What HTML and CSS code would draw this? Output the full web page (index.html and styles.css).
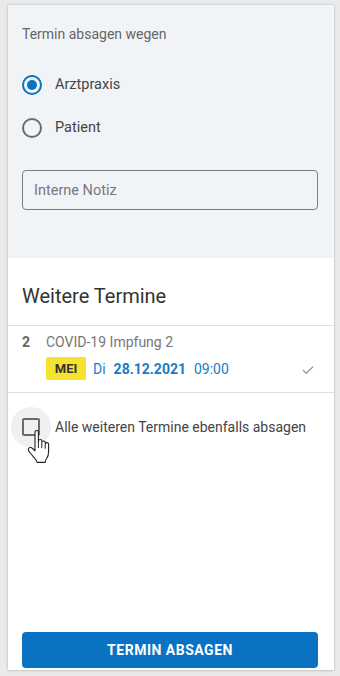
FILE: index.html
```html
<!DOCTYPE html>
<html lang="de">
<head>
<meta charset="utf-8">
<link rel="stylesheet" href="styles.css">
</head>
<body>
<div class="card">
  <section class="reason">
    <div class="reason-title">Termin absagen wegen</div>
    <div class="radios">
      <label class="radio-row"><span class="radio checked"></span><span>Arztpraxis</span></label>
      <label class="radio-row"><span class="radio"></span><span>Patient</span></label>
    </div>
    <div class="note">Interne Notiz</div>
  </section>
  <section class="more">
    <h2 class="more-title">Weitere Termine</h2>
    <div class="appt">
      <div class="appt-line1"><span class="appt-num">2</span><span class="appt-name">COVID-19 Impfung 2</span></div>
      <div class="appt-line2">
        <span class="badge">MEI</span>
        <span class="day">Di</span>
        <span class="date">28.12.2021</span>
        <span class="time">09:00</span>
        <svg class="check" width="12" height="10" viewBox="0 0 12 10"><path d="M1 5.2 L4.2 8.4 L11 1.6" fill="none" stroke="#8a8a8a" stroke-width="1.2"/></svg>
      </div>
    </div>
    <div class="cb-row">
      <span class="cb-hit"><span class="cb"></span></span>
      <span class="cb-label">Alle weiteren Termine ebenfalls absagen</span>
      <svg class="cursor" width="27" height="34" viewBox="0 0 26 34">
        <path d="M7.5 2.2c0-1 .8-1.7 1.7-1.7s1.7.7 1.7 1.7v10.3l.1-1.4c0-.9.8-1.6 1.7-1.6s1.7.7 1.7 1.6v1.5c0-.9.8-1.6 1.7-1.6s1.7.7 1.7 1.6v1.6c0-.9.8-1.6 1.6-1.6.9 0 1.7.7 1.7 1.6v7.2c0 3.2-.7 5.3-2 7.1-1 1.4-1.5 2.5-1.5 3.9H9.6c0-1.3-.9-2.6-2.4-4L2.4 22.5c-1-1-1.6-2.1-1.6-3 0-1.2 1-2 2.1-2 .8 0 1.6.4 2.2 1l2.4 2.4z" fill="#fff" stroke="#222" stroke-width="1.1" stroke-linejoin="round"/>
        <path d="M10.9 12.5v5.5M14.3 13.1v5M17.7 14.6v4.2" stroke="#222" stroke-width="1" fill="none"/>
      </svg>
    </div>
    <div class="spacer"></div>
    <button class="submit">TERMIN ABSAGEN</button>
  </section>
</div>
</body>
</html>
```

FILE: styles.css
```css
html, body {
  margin: 0;
  padding: 0;
}
body {
  background: #eaeaea;
  font-family: Roboto, "Liberation Sans", Arial, sans-serif;
  width: 340px;
  height: 676px;
  box-sizing: border-box;
  padding: 5px 6px 6px 8px;
}
.card {
  background: #fff;
  height: 665px;
  display: flex;
  flex-direction: column;
  box-shadow: 0 0 2px rgba(0,0,0,0.18), 0 1px 3px rgba(0,0,0,0.10);
}
.reason {
  background: #f1f4f7;
  padding: 21px 16px 48px 14px;
}
.reason-title {
  font-size: 14px;
  line-height: 16px;
  color: #666;
}
.radios {
  margin-top: 21px;
  display: flex;
  flex-direction: column;
}
.radio-row {
  height: 43px;
  display: flex;
  align-items: center;
  font-size: 14.5px;
  color: #444;
}
.radio {
  width: 16px;
  height: 16px;
  border: 2px solid #6b6b6b;
  border-radius: 50%;
  margin: 0 13px 0 0;
  box-sizing: content-box;
  position: relative;
}
.radio.checked {
  border-color: #0a72c2;
}
.radio.checked::after {
  content: "";
  position: absolute;
  left: 3px;
  top: 3px;
  width: 10px;
  height: 10px;
  border-radius: 50%;
  background: #0a72c2;
}
.note {
  margin-top: 21px;
  height: 40px;
  box-sizing: border-box;
  border: 1px solid #7d7d7d;
  border-radius: 4px;
  padding: 0 11px;
  display: flex;
  align-items: center;
  font-size: 14.5px;
  color: #777;
}
.more {
  flex: 1;
  display: flex;
  flex-direction: column;
}
.more-title {
  margin: 0;
  padding: 26px 14px 17px;
  font-size: 20px;
  line-height: 24px;
  font-weight: 400;
  color: #333;
  border-bottom: 1px solid #e0e0e0;
}
.appt {
  padding: 8px 20px 12px 14px;
  border-bottom: 1px solid #e0e0e0;
}
.appt-line1 {
  display: flex;
  font-size: 14px;
  line-height: 16px;
  color: #777;
}
.appt-num {
  width: 24px;
  font-weight: 700;
  color: #666;
}
.appt-line2 {
  margin-top: 7px;
  margin-left: 24px;
  display: flex;
  align-items: center;
  font-size: 14px;
  color: #1a7bc4;
}
.badge {
  background: #f7e22f;
  color: #333;
  font-weight: 700;
  font-size: 13px;
  height: 23px;
  width: 40px;
  display: flex;
  align-items: center;
  justify-content: center;
  border-radius: 2px;
  margin-right: 7px;
}
.day {
  margin-right: 8px;
}
.date {
  font-weight: 700;
  margin-right: 8px;
}
.check {
  margin-left: auto;
  margin-top: 2px;
}
.cb-row {
  position: relative;
  display: flex;
  align-items: center;
  padding: 14px 0 0 3px;
}
.cb-hit {
  width: 40px;
  height: 40px;
  border-radius: 50%;
  background: #f0f0f0;
  display: flex;
  align-items: center;
  justify-content: center;
  margin-right: 4px;
}
.cb {
  width: 14px;
  height: 14px;
  border: 2px solid #6b6b6b;
  border-radius: 2px;
}
.cb-label {
  font-size: 14px;
  color: #444;
}
.cursor {
  position: absolute;
  left: 19px;
  top: 37px;
}
.spacer {
  flex: 1;
}
.submit {
  margin: 0 16px 2px 14px;
  height: 36px;
  border: none;
  border-radius: 4px;
  background: #0a72c2;
  color: #fff;
  font-family: Roboto, "Liberation Sans", Arial, sans-serif;
  font-size: 14px;
  font-weight: 700;
  letter-spacing: 0.5px;
}
```
